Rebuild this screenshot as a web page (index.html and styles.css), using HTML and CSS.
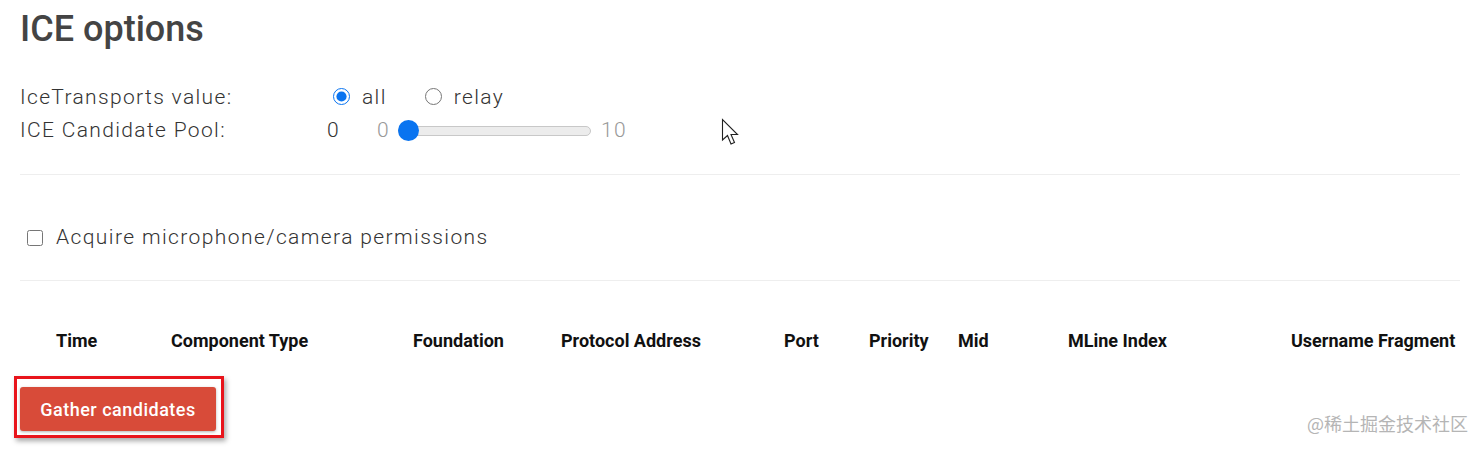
FILE: index.html
```html
<!DOCTYPE html>
<html>
<head>
<meta charset="utf-8">
<link rel="stylesheet" href="styles.css">
</head>
<body>
<div class="page">
  <h1 class="title">ICE options</h1>
  <div class="options">
    <div class="opt-row">
      <span class="opt-label">IceTransports value:</span>
      <div class="radios">
        <label class="radio"><input type="radio" name="t" checked><span>all</span></label>
        <label class="radio"><input type="radio" name="t"><span>relay</span></label>
      </div>
    </div>
    <div class="opt-row">
      <span class="opt-label">ICE Candidate Pool:</span>
      <div class="pool">
        <span class="pool-value">0</span>
        <span class="pool-min">0</span>
        <input class="slider" type="range" min="0" max="10" value="0">
        <span class="pool-max">10</span>
      </div>
    </div>
  </div>
  <hr class="divider first">
  <label class="perm"><input type="checkbox"><span>Acquire microphone/camera permissions</span></label>
  <hr class="divider second">
  <div class="heads">
    <span>Time</span>
    <span>Component Type</span>
    <span>Foundation</span>
    <span>Protocol Address</span>
    <span>Port</span>
    <span>Priority</span>
    <span>Mid</span>
    <span>MLine Index</span>
    <span>Username Fragment</span>
  </div>
  <div class="highlight">
    <button class="gather">Gather candidates</button>
  </div>
</div>
<svg class="cursor" width="20" height="30" viewBox="0 0 20 30">
  <path d="M1.5 1.5 L1.5 22 L6.5 17.5 L10 26 L13.5 24.5 L10 16.5 L16.5 16.5 Z" fill="#fff" stroke="#222" stroke-width="1.1" stroke-linejoin="miter"/>
</svg>
<div class="watermark">@稀土掘金技术社区</div>
</body>
</html>
```
FILE: styles.css
```css
html, body {
  margin: 0;
  padding: 0;
  background: #fff;
}
body {
  font-family: Roboto, "Noto Sans", sans-serif;
  color: #333;
  width: 1484px;
  height: 451px;
  overflow: hidden;
  position: relative;
}
.page {
  padding: 0 24px 0 20px;
}
.title {
  margin: 7px 0 0;
  font-size: 36px;
  line-height: 44px;
  font-weight: 500;
  color: #444;
}
.options {
  margin-top: 30px;
  font-size: 21px;
  font-weight: 300;
  line-height: 33px;
  letter-spacing: 1.35px;
}
.opt-row {
  display: flex;
  align-items: center;
  height: 33px;
}
.opt-label {
  width: 300px;
}
.radios {
  display: flex;
  margin-left: 13px;
}
.radio {
  display: flex;
  align-items: center;
}
.radio input {
  width: 17px;
  height: 17px;
  margin: 0 12px 2px 0;
  accent-color: #0a74f0;
}
.radio:first-child {
  margin-right: 38px;
}
.pool {
  display: flex;
  align-items: center;
  margin-left: 7px;
}
.pool-value {
  width: 50px;
}
.pool-min {
  color: #999;
  width: 21px;
}
.pool-max {
  color: #999;
  margin-left: 10px;
}
.slider {
  -webkit-appearance: none;
  appearance: none;
  width: 193px;
  height: 10px;
  margin: 0;
  background: #ececec;
  border: 1px solid #c8c8c8;
  border-radius: 6px;
  box-sizing: border-box;
  outline: none;
}
.slider::-webkit-slider-thumb {
  -webkit-appearance: none;
  appearance: none;
  width: 21px;
  height: 21px;
  border-radius: 50%;
  background: #0a74f0;
  border: none;
  margin-left: -1px;
}
.divider {
  border: 0;
  border-top: 1px solid #eee;
  margin: 0;
}
.divider.first {
  margin-top: 27px;
}
.perm {
  display: flex;
  align-items: center;
  margin-top: 46px;
  font-size: 21px;
  font-weight: 300;
  line-height: 33px;
  height: 33px;
  letter-spacing: 1.4px;
}
.perm input {
  width: 16px;
  height: 16px;
  margin: 0 13px 0 7px;
}
.divider.second {
  margin-top: 26px;
}
.heads {
  display: grid;
  grid-template-columns: 115px 242px 148px 223px 85px 89px 110px 223px auto;
  margin-top: 48px;
  padding-left: 36px;
  font-size: 18px;
  font-weight: 700;
  line-height: 24px;
  color: #111;
}
.highlight {
  display: inline-block;
  margin: 23px 0 0 -6px;
  border: 3px solid #e8141b;
  padding: 8px 5px 4px 3px;
  box-shadow: 2px 3px 5px rgba(0, 0, 0, 0.35);
}
.gather {
  display: block;
  width: 196px;
  height: 44px;
  border: 0;
  border-radius: 3px;
  background: #d84b39;
  color: #fff;
  font-family: Roboto, sans-serif;
  font-size: 18px;
  font-weight: 500;
  letter-spacing: 0.5px;
  padding: 0;
  box-shadow: 0 1px 3px rgba(0, 0, 0, 0.3);
}
.cursor {
  position: absolute;
  left: 721px;
  top: 118px;
}
.watermark {
  position: absolute;
  right: 16px;
  top: 410px;
  font-family: "Noto Sans CJK SC", sans-serif;
  font-size: 18px;
  color: #b5b5b5;
  line-height: 26px;
}
```
